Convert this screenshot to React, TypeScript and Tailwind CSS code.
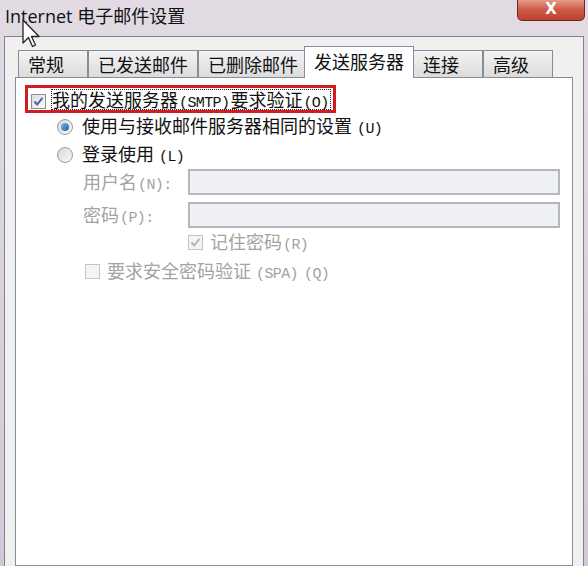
import React from 'react';

const cjk = "font-['Noto_Sans_CJK_SC',sans-serif]";
const mono = "font-['Liberation_Mono','Noto_Sans_CJK_SC',monospace] text-[15px] tracking-[-0.6px] px-[1px]";

const tabs = [
  { label: '常规', w: 'w-[70px]' },
  { label: '已发送邮件', w: 'w-[110px]' },
  { label: '已删除邮件', w: 'w-[107px]' },
  { label: '发送服务器', w: 'w-[110px]', active: true },
  { label: '连接', w: 'w-[70px]' },
  { label: '高级', w: 'w-[70px]' },
];

function Check({ checked, disabled }: { checked?: boolean; disabled?: boolean }) {
  return (
    <span
      className={`inline-flex h-[15px] w-[15px] shrink-0 items-center justify-center border ${
        disabled ? 'border-[#c4c4c4] bg-[#f4f4f4]' : 'border-[#8e8f8f] bg-gradient-to-br from-[#dcdcdc] to-[#fbfbfb]'
      }`}
    >
      {checked && (
        <svg width="11" height="11" viewBox="0 0 11 11">
          <path
            d="M1.5 5.5 L4.2 8.5 L9.5 1.8"
            fill="none"
            stroke={disabled ? '#b4b4b4' : '#4b63a6'}
            strokeWidth="2"
          />
        </svg>
      )}
    </span>
  );
}

function Radio({ checked }: { checked?: boolean }) {
  return (
    <span className="inline-flex h-[16px] w-[16px] shrink-0 items-center justify-center rounded-full border border-[#9a9a9a] bg-gradient-to-br from-[#d8d8d8] to-[#fafafa]">
      {checked && (
        <span className="h-[8px] w-[8px] rounded-full bg-gradient-to-br from-[#7fb6ea] to-[#1d5ea8]" />
      )}
    </span>
  );
}

export default function App() {
  return (
    <div className={`relative flex h-[566px] w-[588px] flex-col overflow-hidden bg-gradient-to-b from-[#e2dbe4] to-[#d3c9d6] ${cjk}`}>
      {/* Title bar */}
      <div className="flex h-[36px] items-start">
        <span className="pl-[5px] pt-[1px] text-[18px] leading-[28px] text-[#111]">
          <span className="font-['Open_Sans',sans-serif]">Internet </span>电子邮件设置
        </span>
        <div className="ml-auto mr-[3px] -mt-[2px] flex h-[23px] w-[68px] items-center justify-center rounded-b-[5px] border border-[#6b2a24] bg-gradient-to-b from-[#e7a293] via-[#cf5a47] to-[#c0402f]">
          <span className="font-['DejaVu_Sans',sans-serif] text-[15px] font-bold leading-none text-white">X</span>
        </div>
      </div>

      {/* Window frame */}
      <div className="mx-[4px] flex flex-1 flex-col border-x border-t border-[#80828a] bg-[#f0f0f0] px-[10px]">
        {/* Tabs */}
        <div className="relative z-10 -mb-px flex h-[41px] items-end pl-[3px]">
          {tabs.map((t) =>
            t.active ? (
              <div
                key={t.label}
                className={`${t.w} -mx-[1px] flex h-[32px] items-start border-x border-t border-[#898c95] bg-white pl-[9px] pt-[2px] text-[18px] leading-[24px] text-[#111]`}
              >
                {t.label}
              </div>
            ) : (
              <div
                key={t.label}
                className={`${t.w} mb-px flex h-[27px] items-center border-x border-t border-[#898c95] bg-gradient-to-b from-[#f3f3f3] to-[#dcdcdc] pl-[9px] text-[18px] leading-[24px] text-[#111]`}
              >
                {t.label}
              </div>
            )
          )}
        </div>

        {/* Panel */}
        <div className="flex flex-1 flex-col border border-[#898c95] bg-white pl-[9px] pt-[7px] text-[18px] text-[#111]">
          <div className="flex h-[28px] w-[311px] items-center border-[3px] border-[#d11d22]">
            <span className="ml-[3px]">
              <Check checked />
            </span>
            <span className="ml-[5px] flex h-[21px] items-baseline border border-dotted border-[#222] leading-[19px]">
              我的发送服务器<span className={mono}>(SMTP)</span>要求验证<span className={mono}>(O)</span>
            </span>
          </div>

          <div className="flex h-[27px] items-center gap-[9px] pl-[32px]">
            <Radio checked />
            <span className="flex items-baseline gap-[4px] leading-none">
              使用与接收邮件服务器相同的设置<span className={mono}>(U)</span>
            </span>
          </div>

          <div className="flex h-[29px] items-center gap-[9px] pl-[32px]">
            <Radio />
            <span className="flex items-baseline gap-[4px] leading-none">
              登录使用<span className={mono}>(L)</span>
            </span>
          </div>

          <div className="flex h-[26px] items-center pl-[58px] text-[#a3a3a3]">
            <span className="flex w-[105px] items-baseline leading-none">
              用户名<span className={mono}>(N):</span>
            </span>
            <div className="h-[26px] w-[372px] border-2 border-[#b4b8be] bg-[#eef0f3]" />
          </div>

          <div className="mt-[7px] flex h-[26px] items-center pl-[58px] text-[#a3a3a3]">
            <span className="flex w-[105px] items-baseline leading-none">
              密码<span className={mono}>(P):</span>
            </span>
            <div className="h-[26px] w-[372px] border-2 border-[#b4b8be] bg-[#eef0f3]" />
          </div>

          <div className="flex h-[29px] items-center gap-[7px] pl-[163px] text-[#a3a3a3]">
            <Check checked disabled />
            <span className="flex items-baseline leading-none">
              记住密码<span className={mono}>(R)</span>
            </span>
          </div>

          <div className="flex h-[28px] items-center gap-[7px] pl-[60px] text-[#a3a3a3]">
            <Check disabled />
            <span className="flex items-baseline gap-[4px] leading-none">
              要求安全密码验证<span className={mono}>(SPA)</span>
              <span className={mono}>(Q)</span>
            </span>
          </div>
        </div>
      </div>

      {/* Mouse pointer */}
      <svg className="absolute left-[22px] top-[19px]" width="20" height="30" viewBox="0 0 20 30">
        <path
          d="M1 1 L1 24 L6.5 18.5 L10.5 27.5 L13.5 26 L9.5 17.5 L17 17.5 Z"
          fill="#fff"
          stroke="#222"
          strokeWidth="1.3"
          strokeLinejoin="round"
        />
      </svg>
    </div>
  );
}
